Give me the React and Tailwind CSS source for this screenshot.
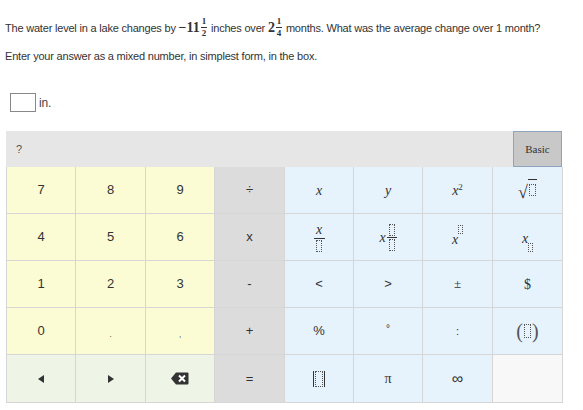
import React from "react";

const Box = ({ w = 7, h = 11, className = "" }) => (
  <span
    className={`inline-block border border-dotted border-[#555] ${className}`}
    style={{ width: w, height: h }}
  />
);

function Frac({ n, d }) {
  return (
    <span className="inline-flex flex-col items-center align-middle mx-[1px] leading-none text-[9px] font-bold font-['Liberation_Serif',serif] -mt-[4px]">
      <span className="border-b border-[#333] px-[1px] pb-[1px]">{n}</span>
      <span className="pt-[1px]">{d}</span>
    </span>
  );
}

function Cell({ bg, children, className = "" }) {
  return (
    <div
      className={`${bg} border-r border-b border-[#d6d6d6] flex items-center justify-center text-[13px] text-[#333] ${className}`}
    >
      {children}
    </div>
  );
}

const Y = "bg-[#fbfbd4]";
const G = "bg-[#dcdcdc]";
const B = "bg-[#e6f2fc]";
const L = "bg-[#eef5e6]";

const serif = "font-['Liberation_Serif',serif] italic text-[14px]";

export default function App() {
  return (
    <div className="w-[583px] h-[410px] bg-white font-['Liberation_Sans',Arial,sans-serif] text-[#333] overflow-hidden">
      <div className="pl-[5px] pt-[18px] text-[11px] tracking-[-0.2px]">
        <p className="h-[20px] leading-[20px] whitespace-nowrap">
          The water level in a lake changes by{" "}
          <span className="font-['Liberation_Serif',serif] font-bold text-[14px] tracking-normal">−11</span>
          <Frac n="1" d="2" /> inches over{" "}
          <span className="font-['Liberation_Serif',serif] font-bold text-[14px]">2</span>
          <Frac n="1" d="4" /> months. What was the average change over 1 month?
        </p>
        <p className="mt-[10px] leading-[16px]">Enter your answer as a mixed number, in simplest form, in the box.</p>
        <div className="mt-[29px] flex items-center pl-[5px]">
          <span className="inline-block w-[26px] h-[19px] border border-[#888] bg-white" />
          <span className="ml-[3px] text-[12px] text-[#444]">in.</span>
        </div>
      </div>

      <div className="ml-[6px] mt-[19px] w-[556px]">
        <div className="h-[36px] bg-[#e6e6e6] flex items-center justify-between">
          <span className="pl-[10px] text-[11px] text-[#555]">?</span>
          <div className="w-[49px] h-[36px] bg-[#c8c8c8] border border-[#8ea5c0] flex items-center justify-center text-[11px] font-['Liberation_Serif',serif] text-[#333]">
            Basic
          </div>
        </div>
        <div className="grid grid-cols-[69px_70px_69px_70px_69px_69px_70px_70px] grid-rows-[47px_47px_47px_47px_48px] border-l border-[#d6d6d6]">
          <Cell bg={Y}>7</Cell>
          <Cell bg={Y}>8</Cell>
          <Cell bg={Y}>9</Cell>
          <Cell bg={G} className="text-[11px]">÷</Cell>
          <Cell bg={B}><span className={serif}>x</span></Cell>
          <Cell bg={B}><span className={serif}>y</span></Cell>
          <Cell bg={B}>
            <span className={serif}>x<sup className="not-italic text-[9px]">2</sup></span>
          </Cell>
          <Cell bg={B}>
            <span className="flex items-end">
              <span className="font-['Liberation_Serif',serif] text-[18px] leading-none">√</span>
              <span className="border-t border-[#333] pt-[2px] pl-[1px] pr-[1px]"><Box w={7} h={12} /></span>
            </span>
          </Cell>

          <Cell bg={Y}>4</Cell>
          <Cell bg={Y}>5</Cell>
          <Cell bg={Y}>6</Cell>
          <Cell bg={G} className="text-[11px]">x</Cell>
          <Cell bg={B}>
            <span className="flex flex-col items-center">
              <span className={`${serif} text-[12px] leading-none`}>x</span>
              <span className="w-[11px] border-t border-[#333] mt-[1px] mb-[1px]" />
              <Box w={6} h={12} />
            </span>
          </Cell>
          <Cell bg={B}>
            <span className="flex items-center">
              <span className={`${serif} text-[12px]`}>x</span>
              <span className="flex flex-col items-center ml-[1px]">
                <Box w={6} h={12} />
                <span className="w-[10px] border-t border-[#333] my-[1px]" />
                <Box w={6} h={12} />
              </span>
            </span>
          </Cell>
          <Cell bg={B}>
            <span className="flex items-start">
              <span className={`${serif} text-[12px] mt-[4px]`}>x</span>
              <Box w={5} h={9} />
            </span>
          </Cell>
          <Cell bg={B}>
            <span className="flex items-end mt-[6px]">
              <span className={`${serif} text-[12px] mb-[3px]`}>x</span>
              <Box w={5} h={9} />
            </span>
          </Cell>

          <Cell bg={Y}>1</Cell>
          <Cell bg={Y}>2</Cell>
          <Cell bg={Y}>3</Cell>
          <Cell bg={G} className="text-[11px]">-</Cell>
          <Cell bg={B} className="text-[12px]">&lt;</Cell>
          <Cell bg={B} className="text-[12px]">&gt;</Cell>
          <Cell bg={B} className="font-['Liberation_Serif',serif]">±</Cell>
          <Cell bg={B} className="font-['Liberation_Serif',serif] text-[14px]">$</Cell>

          <Cell bg={Y}>0</Cell>
          <Cell bg={Y}><span className="mt-[8px] text-[8px]">.</span></Cell>
          <Cell bg={Y}><span className="mt-[8px] text-[8px]">,</span></Cell>
          <Cell bg={G}>+</Cell>
          <Cell bg={B}>%</Cell>
          <Cell bg={B}><span className="text-[10px] -mt-[6px]">°</span></Cell>
          <Cell bg={B}><span className="text-[11px]">:</span></Cell>
          <Cell bg={B}>
            <span className="flex items-center font-['Liberation_Serif',serif] text-[20px] text-[#555] leading-none">
              (<Box w={7} h={14} className="mx-[1px]" />)
            </span>
          </Cell>

          <Cell bg={L}>
            <svg width="8" height="10" viewBox="0 0 8 10"><path d="M7 1 L1 5 L7 9 Z" fill="#333" /></svg>
          </Cell>
          <Cell bg={L}>
            <svg width="8" height="10" viewBox="0 0 8 10"><path d="M1 1 L7 5 L1 9 Z" fill="#333" /></svg>
          </Cell>
          <Cell bg={L}>
            <svg width="18" height="13" viewBox="0 0 18 13">
              <path d="M5 0.5 H16.5 Q17.5 0.5 17.5 1.5 V11.5 Q17.5 12.5 16.5 12.5 H5 L0 6.5 Z" fill="#333" />
              <path d="M8 3.5 L14 9.5 M14 3.5 L8 9.5" stroke="#fff" strokeWidth="2" />
            </svg>
          </Cell>
          <Cell bg={G}>=</Cell>
          <Cell bg={B}>
            <span className="flex items-center">
              <span className="w-[1px] h-[16px] bg-[#333]" />
              <Box w={8} h={16} className="mx-[1px]" />
              <span className="w-[1px] h-[16px] bg-[#333]" />
            </span>
          </Cell>
          <Cell bg={B}><span className="font-['Liberation_Serif',serif] text-[14px]">π</span></Cell>
          <Cell bg={B}><span className="text-[16px]">∞</span></Cell>
          <Cell bg="bg-[#f8f8f8]" />
        </div>
      </div>
    </div>
  );
}
